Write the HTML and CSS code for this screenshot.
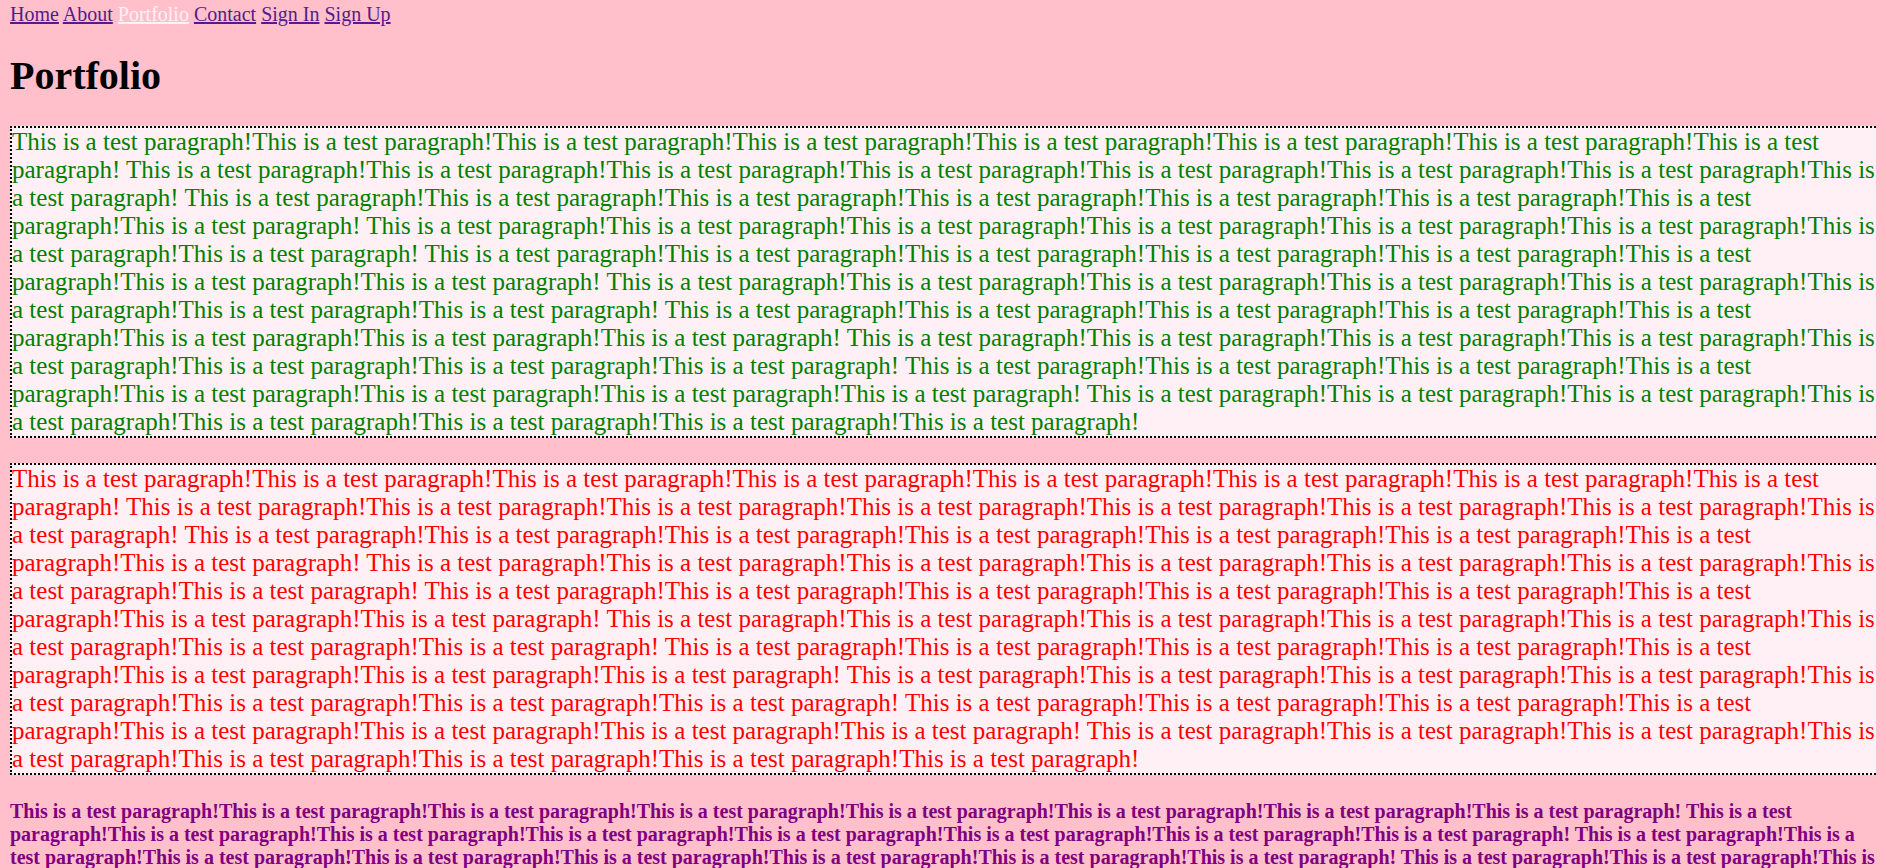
FILE: index.html
```html
<!DOCTYPE html>
<html lang="en">
<head>
<meta charset="utf-8">
<title>Portfolio</title>
<link rel="stylesheet" href="styles.css">
</head>
<body>
<nav class="nav"><a href="#" class="nav-link">Home</a> <a href="#" class="nav-link">About</a> <a href="#" class="nav-link nav-link--active">Portfolio</a> <a href="#" class="nav-link">Contact</a> <a href="#" class="nav-link">Sign In</a> <a href="#" class="nav-link">Sign Up</a></nav>
<h1 class="title">Portfolio</h1>
<p class="box box--green">
This is a test paragraph!This is a test paragraph!This is a test paragraph!This is a test paragraph!This is a test paragraph!This is a test paragraph!This is a test paragraph!This is a test paragraph!
This is a test paragraph!This is a test paragraph!This is a test paragraph!This is a test paragraph!This is a test paragraph!This is a test paragraph!This is a test paragraph!This is a test paragraph!
This is a test paragraph!This is a test paragraph!This is a test paragraph!This is a test paragraph!This is a test paragraph!This is a test paragraph!This is a test paragraph!This is a test paragraph!
This is a test paragraph!This is a test paragraph!This is a test paragraph!This is a test paragraph!This is a test paragraph!This is a test paragraph!This is a test paragraph!This is a test paragraph!
This is a test paragraph!This is a test paragraph!This is a test paragraph!This is a test paragraph!This is a test paragraph!This is a test paragraph!This is a test paragraph!This is a test paragraph!
This is a test paragraph!This is a test paragraph!This is a test paragraph!This is a test paragraph!This is a test paragraph!This is a test paragraph!This is a test paragraph!This is a test paragraph!
This is a test paragraph!This is a test paragraph!This is a test paragraph!This is a test paragraph!This is a test paragraph!This is a test paragraph!This is a test paragraph!This is a test paragraph!
This is a test paragraph!This is a test paragraph!This is a test paragraph!This is a test paragraph!This is a test paragraph!This is a test paragraph!This is a test paragraph!This is a test paragraph!
This is a test paragraph!This is a test paragraph!This is a test paragraph!This is a test paragraph!This is a test paragraph!This is a test paragraph!This is a test paragraph!This is a test paragraph!
This is a test paragraph!This is a test paragraph!This is a test paragraph!This is a test paragraph!This is a test paragraph!This is a test paragraph!This is a test paragraph!This is a test paragraph!
</p>
<p class="box box--red">
This is a test paragraph!This is a test paragraph!This is a test paragraph!This is a test paragraph!This is a test paragraph!This is a test paragraph!This is a test paragraph!This is a test paragraph!
This is a test paragraph!This is a test paragraph!This is a test paragraph!This is a test paragraph!This is a test paragraph!This is a test paragraph!This is a test paragraph!This is a test paragraph!
This is a test paragraph!This is a test paragraph!This is a test paragraph!This is a test paragraph!This is a test paragraph!This is a test paragraph!This is a test paragraph!This is a test paragraph!
This is a test paragraph!This is a test paragraph!This is a test paragraph!This is a test paragraph!This is a test paragraph!This is a test paragraph!This is a test paragraph!This is a test paragraph!
This is a test paragraph!This is a test paragraph!This is a test paragraph!This is a test paragraph!This is a test paragraph!This is a test paragraph!This is a test paragraph!This is a test paragraph!
This is a test paragraph!This is a test paragraph!This is a test paragraph!This is a test paragraph!This is a test paragraph!This is a test paragraph!This is a test paragraph!This is a test paragraph!
This is a test paragraph!This is a test paragraph!This is a test paragraph!This is a test paragraph!This is a test paragraph!This is a test paragraph!This is a test paragraph!This is a test paragraph!
This is a test paragraph!This is a test paragraph!This is a test paragraph!This is a test paragraph!This is a test paragraph!This is a test paragraph!This is a test paragraph!This is a test paragraph!
This is a test paragraph!This is a test paragraph!This is a test paragraph!This is a test paragraph!This is a test paragraph!This is a test paragraph!This is a test paragraph!This is a test paragraph!
This is a test paragraph!This is a test paragraph!This is a test paragraph!This is a test paragraph!This is a test paragraph!This is a test paragraph!This is a test paragraph!This is a test paragraph!
</p>
<p class="note">
This is a test paragraph!This is a test paragraph!This is a test paragraph!This is a test paragraph!This is a test paragraph!This is a test paragraph!This is a test paragraph!This is a test paragraph!
This is a test paragraph!This is a test paragraph!This is a test paragraph!This is a test paragraph!This is a test paragraph!This is a test paragraph!This is a test paragraph!This is a test paragraph!
This is a test paragraph!This is a test paragraph!This is a test paragraph!This is a test paragraph!This is a test paragraph!This is a test paragraph!This is a test paragraph!This is a test paragraph!
This is a test paragraph!This is a test paragraph!This is a test paragraph!This is a test paragraph!This is a test paragraph!This is a test paragraph!This is a test paragraph!This is a test paragraph!
This is a test paragraph!This is a test paragraph!This is a test paragraph!This is a test paragraph!This is a test paragraph!This is a test paragraph!This is a test paragraph!This is a test paragraph!
This is a test paragraph!This is a test paragraph!This is a test paragraph!This is a test paragraph!This is a test paragraph!This is a test paragraph!This is a test paragraph!This is a test paragraph!
This is a test paragraph!This is a test paragraph!This is a test paragraph!This is a test paragraph!This is a test paragraph!This is a test paragraph!This is a test paragraph!This is a test paragraph!
This is a test paragraph!This is a test paragraph!This is a test paragraph!This is a test paragraph!This is a test paragraph!This is a test paragraph!This is a test paragraph!This is a test paragraph!
This is a test paragraph!This is a test paragraph!This is a test paragraph!This is a test paragraph!This is a test paragraph!This is a test paragraph!This is a test paragraph!This is a test paragraph!
This is a test paragraph!This is a test paragraph!This is a test paragraph!This is a test paragraph!This is a test paragraph!This is a test paragraph!This is a test paragraph!This is a test paragraph!
</p>
</body>
</html>
```
FILE: styles.css
```css
html {
  overflow-x: hidden;
  background: #ffc0cb;
}

body {
  margin: 3px 10px 10px;
  background: #ffc0cb;
  font-family: "Liberation Serif", "Times New Roman", serif;
  font-size: 20px;
  line-height: 23px;
  color: #000;
}

.nav {
  display: block;
}

.nav-link {
  color: #551a8b;
  text-decoration: underline;
}

.nav-link--active {
  color: #fff0f5;
}

.title {
  font-size: 40px;
  line-height: 47px;
  font-weight: bold;
  margin: 26px 0 27px;
}

.box {
  margin: 25px -16px 25px 0;
  padding: 0 12px 0 0;
  border: 2px dotted #000;
  background: #fff0f5;
  font-size: 25px;
  line-height: 28px;
}

.box--green {
  color: #008000;
}

.box--red {
  color: #ff0000;
}

.note {
  margin: 25px 0;
  color: #800080;
  font-weight: bold;
  font-size: 20px;
  line-height: 23px;
}
```
